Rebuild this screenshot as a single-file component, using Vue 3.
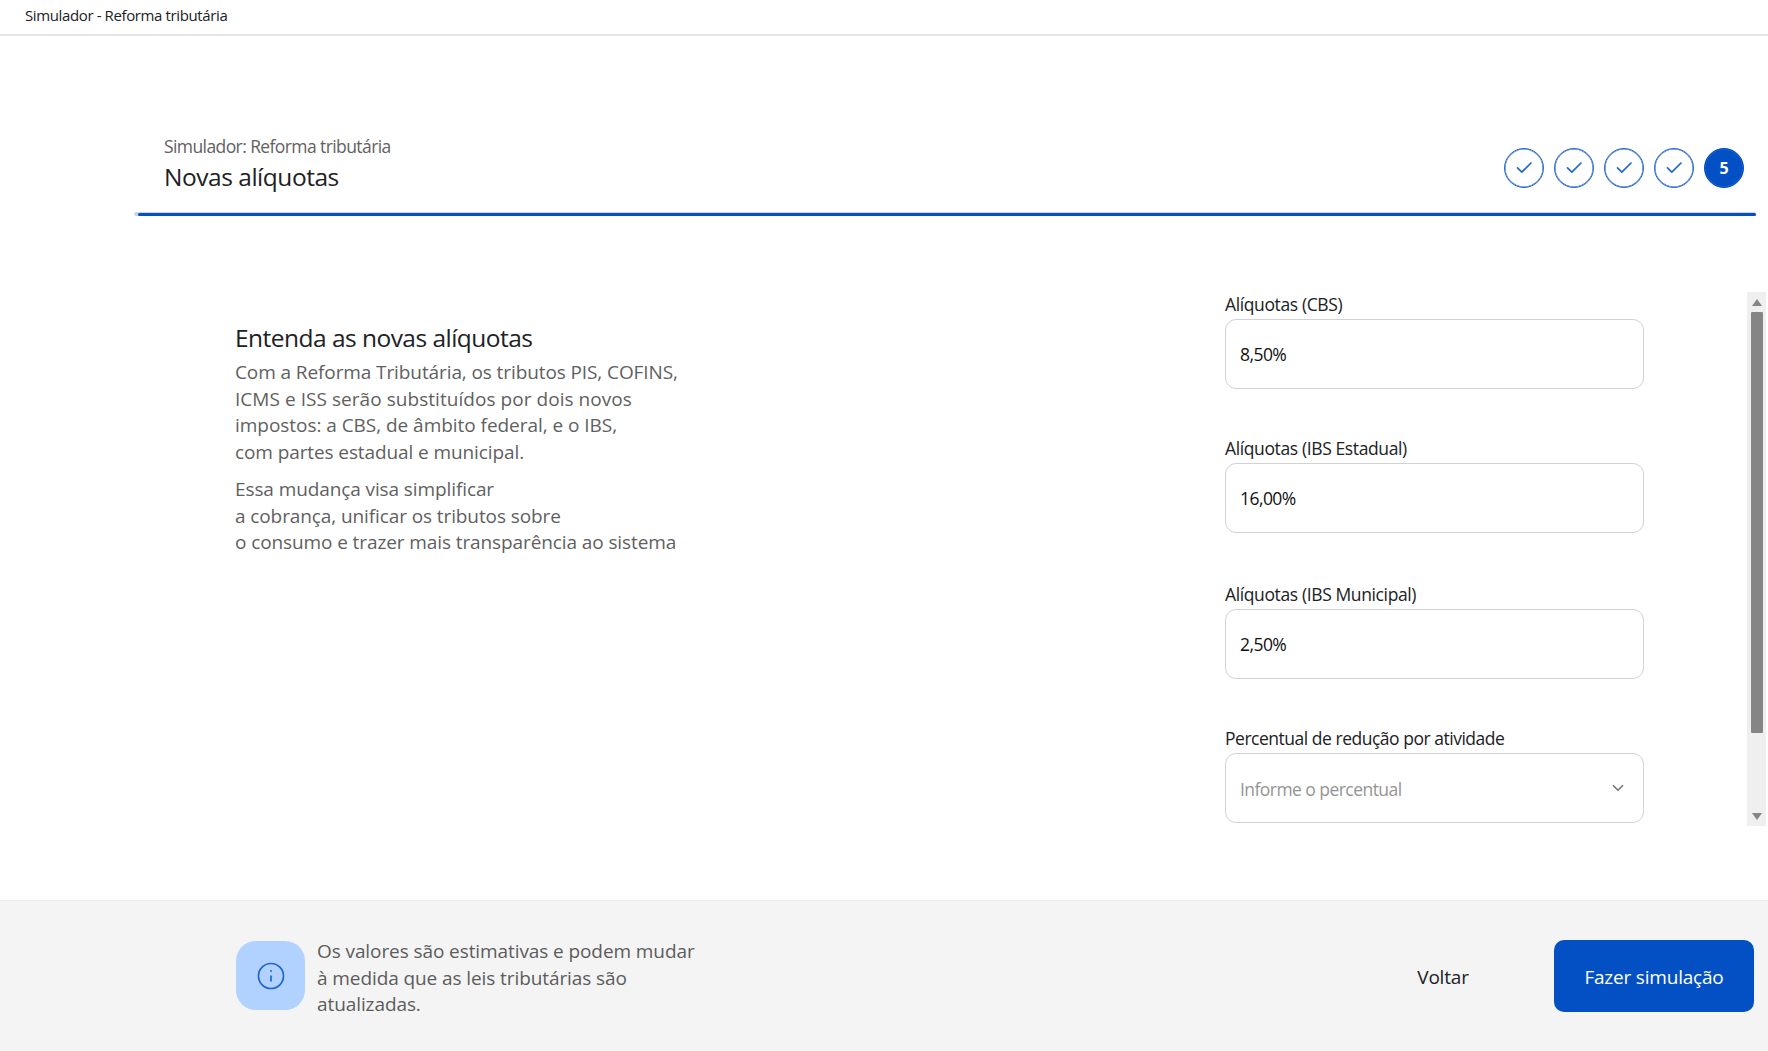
<script setup>
import { ref } from "vue";

const currentStep = 5;

const fields = ref([
  { label: "Alíquotas (CBS)", value: "8,50%", name: "cbs" },
  { label: "Alíquotas (IBS Estadual)", value: "16,00%", name: "estadual" },
  { label: "Alíquotas (IBS Municipal)", value: "2,50%", name: "municipal" },
]);
</script>

<template>
  <div class="page">
    <div class="topbar">Simulador - Reforma tributária</div>

    <header class="header">
      <div>
        <p class="subtitle">Simulador: Reforma tributária</p>
        <h1 class="title">Novas alíquotas</h1>
      </div>
      <div class="steps">
        <div v-for="n in currentStep" :key="n" class="step" :class="{ active: n === currentStep }">
          <span v-if="n === currentStep">{{ n }}</span>
          <svg v-else width="40" height="40" viewBox="0 0 40 40">
            <path d="M13.5 19.8 L17.8 24.2 L27 15" />
          </svg>
        </div>
      </div>
    </header>
    <div class="progress"><div class="progress-bar"></div></div>

    <main class="content">
      <section class="info">
        <h2>Entenda as novas alíquotas</h2>
        <p class="p1">
          Com a Reforma Tributária, os tributos PIS, COFINS,<br />
          <span class="wide">ICMS e ISS serão substituídos por dois novos</span><br />
          <span class="normal">impostos: a CBS, de âmbito federal, e o IBS,</span><br />
          com partes estadual e municipal.
        </p>
        <p class="p2">
          Essa mudança visa simplificar<br />
          a cobrança, unificar os tributos sobre<br />
          o consumo e trazer mais transparência ao sistema
        </p>
      </section>

      <section class="form">
        <div v-for="field in fields" :key="field.name" class="field" :class="field.name">
          <label>{{ field.label }}</label>
          <div class="box"><span>{{ field.value }}</span></div>
        </div>
        <div class="field percentual">
          <label>Percentual de redução por atividade</label>
          <div class="box select">
            <span>Informe o percentual</span>
            <svg width="12" height="8" viewBox="0 0 12 8"><path d="M1 1.2 L6 6.2 L11 1.2" /></svg>
          </div>
        </div>
      </section>

      <div class="scrollbar">
        <svg width="10" height="7" viewBox="0 0 10 7"><path d="M5 0 L10 7 H0 Z" /></svg>
        <div class="thumb"></div>
        <svg class="down" width="10" height="7" viewBox="0 0 10 7"><path d="M0 0 H10 L5 7 Z" /></svg>
      </div>
    </main>

    <footer class="footer">
      <div class="info-icon">
        <svg width="28" height="28" viewBox="0 0 28 28">
          <circle cx="14" cy="14" r="12.5" />
          <path d="M14 13.5 V19.5" />
          <circle class="dot" cx="14" cy="9" r="1" />
        </svg>
      </div>
      <p class="notice">
        Os valores são estimativas e podem mudar<br />
        à medida que as leis tributárias são<br />
        atualizadas.
      </p>
      <button class="back">Voltar</button>
      <button class="submit">Fazer simulação</button>
    </footer>
  </div>
</template>

<style>
  body {
    margin: 0;
    background: #fff;
  }
</style>

<style scoped>
  .page {
    width: 1768px;
    height: 1051px;
    display: flex;
    flex-direction: column;
    overflow: hidden;
    background: #fff;
    color: #202124;
    font-family: "Open Sans", "Noto Sans", sans-serif;
  }

  p,
  h1,
  h2 {
    margin: 0;
    font-weight: 400;
    white-space: nowrap;
  }

  .topbar {
    box-sizing: border-box;
    height: 36px;
    padding-left: 25px;
    border-bottom: 2px solid #e5e5e5;
    font-size: 15px;
    line-height: 30px;
    letter-spacing: -0.38px;
  }

  .header {
    display: flex;
    justify-content: space-between;
    box-sizing: border-box;
    height: 176px;
    padding: 95px 24px 0 164px;
  }

  .subtitle {
    font-size: 17.5px;
    line-height: 30px;
    letter-spacing: -0.59px;
    color: #616161;
  }

  .title {
    font-size: 24.5px;
    line-height: 31px;
    letter-spacing: -0.47px;
  }

  .steps {
    display: flex;
    gap: 10px;
    padding-top: 17px;
  }

  .step {
    box-sizing: border-box;
    width: 40px;
    height: 40px;
    display: flex;
    align-items: center;
    justify-content: center;
    border: 1px solid #2467cc;
    box-shadow: inset 0 0 0 0.5px #2467cc;
    border-radius: 50%;
    flex-shrink: 0;
  }

  .step svg {
    flex-shrink: 0;
  }

  .step path {
    fill: none;
    stroke: #2467cc;
    stroke-width: 1.7;
    stroke-linecap: round;
    stroke-linejoin: round;
  }

  .step.active {
    background: #0350c4;
    border-color: #0350c4;
    color: #fff;
    font-size: 16px;
    font-weight: 700;
  }

  .progress {
    height: 4px;
    margin: 0 12px 0 134px;
    border-radius: 2px;
    background: #cfd3da;
    display: flex;
    align-items: center;
  }

  .progress-bar {
    height: 3px;
    flex: 1;
    margin-left: 4px;
    border-radius: 2px;
    background: #0350c4;
  }

  .content {
    display: flex;
    height: 534px;
    margin-top: 76px;
  }

  .info {
    width: 990px;
    margin-left: 235px;
    padding-top: 29px;
    color: #5f5f5f;
  }

  .info h2 {
    font-size: 24.5px;
    line-height: 34px;
    letter-spacing: -0.53px;
    color: #202124;
  }

  .info p {
    font-size: 19px;
    line-height: 26.5px;
    letter-spacing: -0.1px;
  }

  .info .wide {
    letter-spacing: 0.05px;
  }

  .info .normal {
    letter-spacing: -0.04px;
  }

  .p1 {
    padding-top: 4px;
  }

  .p2 {
    padding-top: 11px;
  }

  .form {
    width: 419px;
  }

  .field {
    height: 144px;
  }

  .field.estadual {
    height: 146px;
  }

  .field label {
    display: block;
    height: 27px;
    font-size: 17.5px;
    line-height: 25px;
    letter-spacing: -0.38px;
    white-space: nowrap;
  }

  .field.percentual label {
    letter-spacing: -0.48px;
  }

  .box {
    box-sizing: border-box;
    display: flex;
    align-items: center;
    justify-content: space-between;
    height: 70px;
    padding: 0 19px 0 14px;
    border: 1px solid #d2d2d2;
    border-radius: 11px;
    font-size: 17.5px;
    letter-spacing: -0.55px;
    color: #111;
  }

  .box span {
    margin-top: -1px;
  }

  .box.select {
    color: #949494;
  }

  .select span {
    margin-top: 1px;
  }

  .select path {
    fill: none;
    stroke: #707070;
    stroke-width: 1.5;
  }

  .scrollbar {
    box-sizing: border-box;
    display: flex;
    flex-direction: column;
    align-items: center;
    width: 19px;
    margin-left: 103px;
    padding: 7px 0 6px;
    background: #efefef;
  }

  .scrollbar path {
    fill: #858585;
  }

  .thumb {
    width: 12px;
    height: 421px;
    margin-top: 6px;
    border-radius: 1px;
    background: #858585;
  }

  .down {
    margin-top: auto;
  }

  .footer {
    box-sizing: border-box;
    display: flex;
    align-items: flex-start;
    height: 151px;
    margin-top: auto;
    padding: 39px 14px 0 236px;
    border-top: 1px solid #ededed;
    background: #f4f4f4;
  }

  .info-icon {
    display: flex;
    align-items: center;
    justify-content: center;
    width: 69px;
    height: 69px;
    margin-top: 1px;
    border-radius: 20px;
    background: #b1d2ff;
  }

  .info-icon svg {
    fill: none;
    stroke: #1f65d0;
    stroke-width: 1.7;
  }

  .info-icon .dot {
    fill: #1f65d0;
    stroke: none;
  }

  .notice {
    width: 1071px;
    margin-left: 12px;
    margin-top: -2px;
    font-size: 19px;
    line-height: 26.5px;
    letter-spacing: -0.09px;
    color: #5c5c5c;
  }

  button {
    border: none;
    padding: 1px 0 0;
    height: 72px;
    font-family: inherit;
    font-size: 19px;
    letter-spacing: -0.2px;
    background: none;
    color: #202124;
    white-space: nowrap;
  }

  .back {
    width: 52px;
    margin-left: 29px;
    margin-right: 85px;
  }

  .submit {
    width: 200px;
    border-radius: 10px;
    background: #0350c4;
    color: #fff;
  }
</style>
